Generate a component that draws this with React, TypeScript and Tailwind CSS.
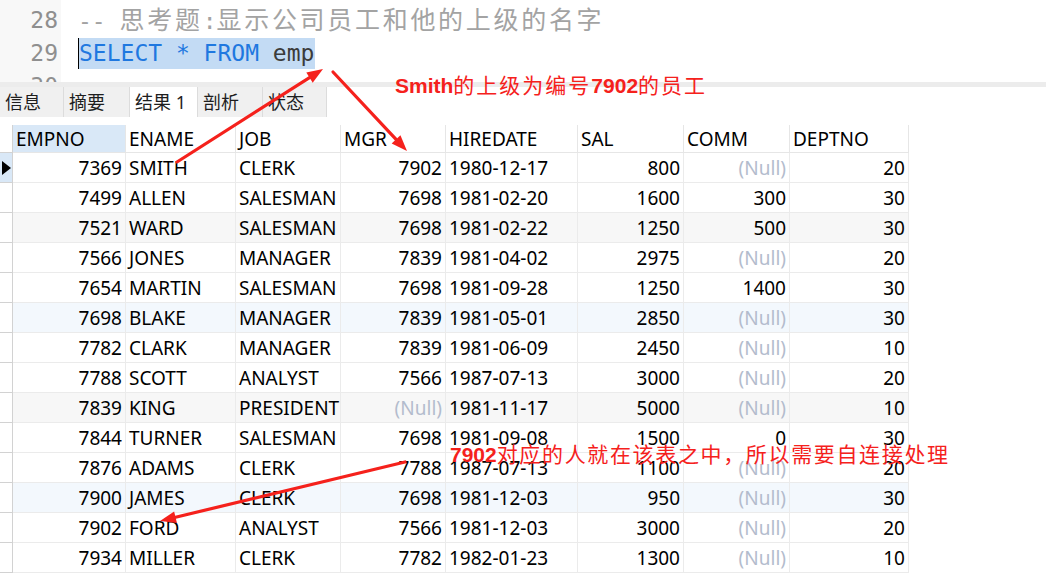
import React from 'react'

type Row = (string | null)[]

const columns = [
  { label: 'EMPNO', w: 'w-[113px]', right: true },
  { label: 'ENAME', w: 'w-[110px]', right: false },
  { label: 'JOB', w: 'w-[105px]', right: false },
  { label: 'MGR', w: 'w-[105px]', right: true },
  { label: 'HIREDATE', w: 'w-[132px]', right: false },
  { label: 'SAL', w: 'w-[106px]', right: true },
  { label: 'COMM', w: 'w-[106px]', right: true },
  { label: 'DEPTNO', w: 'w-[119px]', right: true },
]

const rows: Row[] = [
  ['7369', 'SMITH', 'CLERK', '7902', '1980-12-17', '800', null, '20'],
  ['7499', 'ALLEN', 'SALESMAN', '7698', '1981-02-20', '1600', '300', '30'],
  ['7521', 'WARD', 'SALESMAN', '7698', '1981-02-22', '1250', '500', '30'],
  ['7566', 'JONES', 'MANAGER', '7839', '1981-04-02', '2975', null, '20'],
  ['7654', 'MARTIN', 'SALESMAN', '7698', '1981-09-28', '1250', '1400', '30'],
  ['7698', 'BLAKE', 'MANAGER', '7839', '1981-05-01', '2850', null, '30'],
  ['7782', 'CLARK', 'MANAGER', '7839', '1981-06-09', '2450', null, '10'],
  ['7788', 'SCOTT', 'ANALYST', '7566', '1987-07-13', '3000', null, '20'],
  ['7839', 'KING', 'PRESIDENT', null, '1981-11-17', '5000', null, '10'],
  ['7844', 'TURNER', 'SALESMAN', '7698', '1981-09-08', '1500', '0', '30'],
  ['7876', 'ADAMS', 'CLERK', '7788', '1987-07-13', '1100', null, '20'],
  ['7900', 'JAMES', 'CLERK', '7698', '1981-12-03', '950', null, '30'],
  ['7902', 'FORD', 'ANALYST', '7566', '1981-12-03', '3000', null, '20'],
  ['7934', 'MILLER', 'CLERK', '7782', '1982-01-23', '1300', null, '10'],
]

const tabs = ['信息', '摘要', '结果 1', '剖析', '状态']
const tabWidths = ['w-[64px]', 'w-[66px]', 'w-[68px]', 'w-[65px]', 'w-[64px]']

function rowBg(i: number) {
  if (i === 2 || i === 8) return 'bg-[#f7f7f7]'
  if (i === 5 || i === 11) return 'bg-[#f3f8fd]'
  return 'bg-white'
}

function Arrow({ x1, y1, x2, y2 }: { x1: number; y1: number; x2: number; y2: number }) {
  const dx = x2 - x1
  const dy = y2 - y1
  const len = Math.sqrt(dx * dx + dy * dy)
  const ux = dx / len
  const uy = dy / len
  const bx = x2 - ux * 16
  const by = y2 - uy * 16
  const nx = -uy * 6
  const ny = ux * 6
  return (
    <g>
      <line x1={x1} y1={y1} x2={bx} y2={by} stroke="#f5211c" strokeWidth={3.2} strokeLinecap="round" />
      <polygon
        points={`${x2},${y2} ${bx + nx},${by + ny} ${bx - nx},${by - ny}`}
        fill="#f5211c"
      />
    </g>
  )
}

export default function App() {
  return (
    <div className="relative h-[577px] w-[1046px] overflow-hidden bg-white font-['Noto_Sans','Noto_Sans_CJK_SC',sans-serif]">
      {/* editor */}
      <div className="flex h-[82px] overflow-hidden">
        <div className="flex w-[61px] flex-col bg-[#f8f8f8] pt-[4px] pr-[3px] text-right font-['DejaVu_Sans_Mono','Noto_Sans_CJK_SC',monospace] text-[23px] text-[#8f8f8f]">
          <div className="h-[33px] leading-[33px]">28</div>
          <div className="h-[33px] leading-[33px]">29</div>
          <div className="h-[33px] leading-[33px]">30</div>
        </div>
        <div className="flex flex-col pt-[4px] pl-[17px] font-['DejaVu_Sans_Mono','Noto_Sans_CJK_SC',monospace] text-[23px]">
          <div className="h-[33px] whitespace-pre leading-[33px] text-[#a3a3a3]">
            {'-- '}
            <span className="text-[25px] tracking-[2.7px]">思考题</span>:
            <span className="text-[25px] tracking-[2.7px]">显示公司员工和他的上级的名字</span>
          </div>
          <div className="flex h-[33px] items-center">
            <span className="h-[31px] w-[1px] bg-black" />
            <span className="h-[31px] whitespace-pre bg-[#c3dbf4] pr-[1px] leading-[31px]">
              <span className="text-[#1f78e0]">SELECT * FROM</span>
              <span className="text-[#3b3b3b]"> emp</span>
            </span>
          </div>
        </div>
      </div>

      {/* splitter */}
      <div className="h-[5px] bg-[#ececec]" />

      {/* tabs */}
      <div className="flex h-[30px] text-[18px] text-[#1e1e1e]">
        {tabs.map((t, i) => (
          <div
            key={t}
            className={`${tabWidths[i]} flex items-center border-r border-[#dcdcdc] pl-[5px] ${i === 2 ? 'bg-white' : 'bg-[#f0f0f0]'}`}
          >
            {t}
          </div>
        ))}
      </div>

      {/* grid */}
      <div className="mt-[8px] flex text-[19px] text-black">
        <div className="flex w-[13px] flex-col border-r border-[#d2d2d2]">
          <div className="h-[28px] border-b border-[#d2d2d2]" />
          {rows.map((_, i) => (
            <div
              key={i}
              className={`flex h-[30px] items-center border-b border-[#d2d2d2] ${i === 0 ? 'bg-[#d9e8f7]' : 'bg-white'}`}
            >
              {i === 0 && (
                <svg width="10" height="14" viewBox="0 0 10 14" className="ml-[2px]">
                  <polygon points="0,0 9,7 0,14" fill="#000" />
                </svg>
              )}
            </div>
          ))}
        </div>
        <div className="flex flex-col">
          <div className="flex h-[28px]">
            {columns.map((c, ci) => (
              <div
                key={c.label}
                className={`${c.w} flex items-center border-r border-b border-[#e6e6e6] px-[3px] pt-[1px] ${ci === 0 ? 'bg-[#d9e8f7]' : 'bg-white'}`}
              >
                {c.label}
              </div>
            ))}
          </div>
          {rows.map((r, i) => (
            <div key={i} className={`flex h-[30px] ${rowBg(i)}`}>
              {r.map((v, ci) => (
                <div
                  key={ci}
                  className={`${columns[ci].w} flex items-center border-r border-b border-[#ebebeb] px-[3px] pt-[1px] ${columns[ci].right ? 'justify-end' : 'justify-start'}`}
                >
                  {v === null ? <span className="text-[#b3bccd]">(Null)</span> : v}
                </div>
              ))}
            </div>
          ))}
        </div>
      </div>

      {/* annotations */}
      <svg className="pointer-events-none absolute inset-0" width="1046" height="577">
        <Arrow x1={177} y1={162} x2={323} y2={69} />
        <Arrow x1={333} y1={72} x2={407} y2={151} />
        <Arrow x1={405} y1={462} x2={160} y2={521} />
      </svg>
      <div className="absolute top-[73px] left-[395px] whitespace-nowrap font-['Liberation_Sans','Noto_Sans_CJK_SC',sans-serif] text-[21px] leading-[26px] text-[#f5211c]">
        <span className="font-bold">Smith</span>
        <span className="tracking-[2px]">的上级为编号</span>
        <span className="font-bold">7902</span>
        <span className="tracking-[2px]">的员工</span>
      </div>
      <div className="absolute top-[442px] left-[450px] whitespace-nowrap font-['Liberation_Sans','Noto_Sans_CJK_SC',sans-serif] text-[21px] leading-[26px] text-[#f5211c]">
        <span className="font-bold">7902</span>
        <span className="tracking-[1.65px]">对应的人就在该表之中，所以需要自连接处理</span>
      </div>
    </div>
  )
}
